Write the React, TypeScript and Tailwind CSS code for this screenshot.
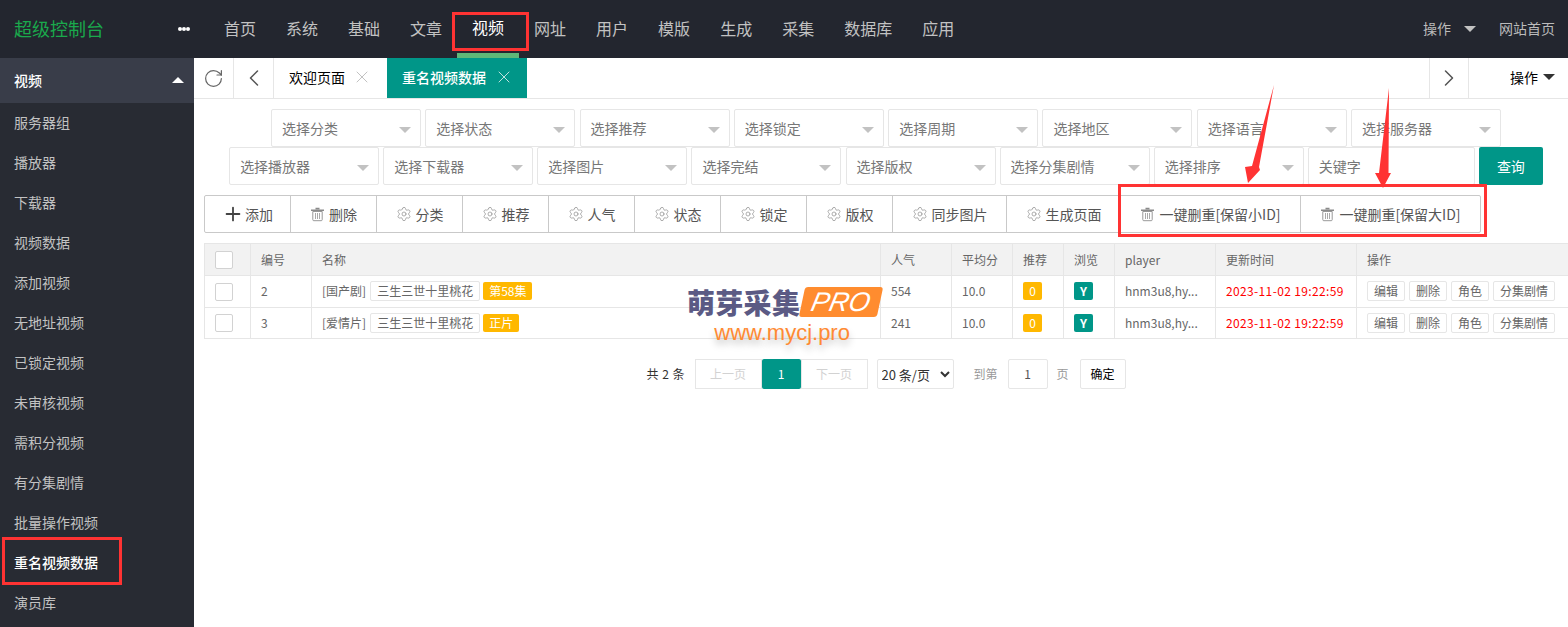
import { ChevronLeft, ChevronRight, Plus, RotateCw, Settings, X } from 'lucide-react';

const NAV = ['首页', '系统', '基础', '文章', '视频', '网址', '用户', '模版', '生成', '采集', '数据库', '应用'];
const SIDE = ['服务器组', '播放器', '下载器', '视频数据', '添加视频', '无地址视频', '已锁定视频', '未审核视频', '需积分视频', '有分集剧情', '批量操作视频', '重名视频数据', '演员库'];
const ROW1 = ['选择分类', '选择状态', '选择推荐', '选择锁定', '选择周期', '选择地区', '选择语言', '选择服务器'];
const ROW2 = ['选择播放器', '选择下载器', '选择图片', '选择完结', '选择版权', '选择分集剧情', '选择排序'];
const GEARS = [
  { label: '分类', w: 'w-[86px]' },
  { label: '推荐', w: 'w-[86px]' },
  { label: '人气', w: 'w-[86px]' },
  { label: '状态', w: 'w-[86px]' },
  { label: '锁定', w: 'w-[86px]' },
  { label: '版权', w: 'w-[86px]' },
  { label: '同步图片', w: 'w-[114px]' },
  { label: '生成页面', w: 'w-[114px]' },
];
const ROWS = [
  { id: 2, type: '[国产剧]', badge: '第58集', hits: 554, h: 'h-8' },
  { id: 3, type: '[爱情片]', badge: '正片', hits: 241, h: 'h-[31px]' },
];

function Select({ label }: { label: string }) {
  return (
    <div className="flex h-[38px] w-[150px] items-center justify-between rounded-[2px] border border-[#e6e6e6] bg-white pl-[10px] pr-[9px] text-sm text-[#777]">
      {label}
      <span className="mt-[3px] h-0 w-0 border-x-[6px] border-t-[6px] border-x-transparent border-t-[#c2c2c2]" />
    </div>
  );
}

function TrashIcon() {
  return (
    <svg width="15" height="15" viewBox="0 0 15 15" className="shrink-0">
      <path d="M5.5 1.5h4M1 3.2h13" stroke="#8a8a8a" strokeWidth="1.6" fill="none" />
      <path d="M2.8 4.5h9.4v8.2a1 1 0 0 1-1 1H3.8a1 1 0 0 1-1-1z" fill="none" stroke="#999" strokeWidth="1" />
      <path d="M5.5 6v6M7.5 6v6M9.5 6v6" stroke="#aaa" strokeWidth="1" />
    </svg>
  );
}

function Checkbox() {
  return <span className="ml-[10px] block h-[18px] w-[18px] rounded-[2px] border border-[#d2d2d2] bg-white" />;
}

function Th({ children }: { children?: React.ReactNode }) {
  return <th className="border border-[#e6e6e6] pl-[10px] text-left text-xs font-normal text-[#666]">{children}</th>;
}

function Td({ children }: { children?: React.ReactNode }) {
  return <td className="border border-[#e6e6e6] pb-[1px] pl-[10px] text-xs text-[#666]">{children}</td>;
}

function MiniBtn({ label }: { label: string }) {
  return <span className="flex h-5 items-center rounded-[2px] border border-[#e6e6e6] bg-white px-[6px] text-xs text-[#666]">{label}</span>;
}

export default function App() {
  return (
    <div className="relative flex h-[627px] w-full flex-col overflow-hidden bg-white font-['Noto_Sans_CJK_SC',sans-serif]">
      <header className="flex h-[58px] shrink-0 items-center bg-[#23262f]">
        <div className="flex w-[194px] shrink-0 items-center justify-between pb-[2px] pl-[14px] pr-[4px]">
          <span className="text-lg text-[#1aa94c]">超级控制台</span>
          <span className="mt-[2px] flex">
            <i className="h-1 w-1 rounded-full bg-white" />
            <i className="h-1 w-1 rounded-full bg-white" />
            <i className="h-1 w-1 rounded-full bg-white" />
          </span>
        </div>
        <nav className="ml-[15px] flex h-full">
          {NAV.map((n) => (
            <a
              key={n}
              className={
                n === '视频'
                  ? 'flex h-full items-center border-b-[5px] border-[#5fb878] px-[15px] pt-[1px] text-base text-white'
                  : 'flex h-full items-center px-[15px] pb-[2px] text-base text-[#c2c2c2]'
              }
            >
              {n}
            </a>
          ))}
        </nav>
        <div className="ml-auto flex items-center pb-[2px] pr-[13px] text-sm text-[#bbb]">
          操作
          <span className="ml-[13px] mr-[23px] mt-[2px] h-0 w-0 border-x-[6px] border-t-[6px] border-x-transparent border-t-[#c2c2c2]" />
          网站首页
        </div>
      </header>

      <div className="flex min-h-0 flex-1">
        <aside className="w-[194px] shrink-0 bg-[#282b33]">
          <div className="flex h-[45px] items-center justify-between bg-[#393d49] pb-[2px] pl-[14px] pr-[10px] text-sm font-medium text-white">
            视频
            <span className="h-0 w-0 border-x-[6px] border-b-[6px] border-x-transparent border-b-white" />
          </div>
          {SIDE.map((s) => (
            <div
              key={s}
              className={
                s === '重名视频数据'
                  ? 'flex h-10 items-center pb-[3px] pl-[14px] text-sm font-medium text-white'
                  : 'flex h-10 items-center pb-[3px] pl-[14px] text-sm text-[#c2c2c2]'
              }
            >
              {s}
            </div>
          ))}
        </aside>

        <main className="min-w-0 flex-1">
          <div className="flex h-[41px] items-stretch border-b border-[#e6e6e6]">
            <div className="flex w-10 items-center justify-center border-r border-[#e6e6e6]">
              <RotateCw className="h-[21px] w-[21px] text-[#666]" strokeWidth={1.4} />
            </div>
            <div className="flex w-10 items-center justify-center border-r border-[#e6e6e6]">
              <ChevronLeft className="h-7 w-7 text-[#555]" strokeWidth={1.3} />
            </div>
            <div className="flex w-[113px] items-center gap-[7px] pb-[2px] pl-[15px] text-sm text-black">
              欢迎页面
              <X className="h-5 w-5 text-[#c2c2c2]" strokeWidth={1.2} />
            </div>
            <div className="flex w-[140px] items-center gap-[8px] bg-[#009688] pb-[2px] pl-[15px] text-sm font-medium text-white">
              重名视频数据
              <X className="h-5 w-5 text-[#bfe3df]" strokeWidth={1.2} />
            </div>
            <div className="ml-auto flex w-10 items-center justify-center border-x border-[#e6e6e6]">
              <ChevronRight className="h-7 w-7 text-[#555]" strokeWidth={1.3} />
            </div>
            <div className="flex w-[99px] items-center justify-end gap-[5px] pb-[2px] pr-[13px] text-sm text-black">
              操作
              <span className="h-0 w-0 border-x-[6px] border-t-[6px] border-x-transparent border-t-[#333]" />
            </div>
          </div>

          <div className="pl-[10px] pt-[10px]">
            <div className="flex justify-center gap-[4.3px]">
              {ROW1.map((l) => (
                <Select key={l} label={l} />
              ))}
            </div>
            <div className="flex justify-center gap-[4.1px]">
              {ROW2.map((l) => (
                <Select key={l} label={l} />
              ))}
              <div className="flex h-[38px] w-[167px] items-center rounded-[2px] border border-[#e6e6e6] pl-[10px] text-sm text-[#777]">关键字</div>
              <button className="h-[38px] w-16 rounded-[2px] bg-[#009688] text-sm text-white">查询</button>
            </div>

            <div className="mt-[10px] flex h-[38px] w-[1277px] rounded-[2px] border border-[#c9c9c9] text-sm text-[#555]">
              <div className="flex w-[86px] items-center justify-center gap-[1px] border-r border-[#c9c9c9]">
                <Plus className="h-[22px] w-[22px] text-[#444]" strokeWidth={2} />
                添加
              </div>
              <div className="flex w-[86px] items-center justify-center gap-[4px] border-r border-[#c9c9c9]">
                <TrashIcon />
                删除
              </div>
              {GEARS.map((g) => (
                <div key={g.label} className={`flex ${g.w} items-center justify-center gap-[4px] border-r border-[#c9c9c9]`}>
                  <Settings className="h-4 w-4 text-[#999]" strokeWidth={1.2} />
                  {g.label}
                </div>
              ))}
              <div className="flex w-[180px] items-center justify-center gap-[4px] border-r border-[#c9c9c9]">
                <TrashIcon />
                一键删重[保留小ID]
              </div>
              <div className="flex w-[179px] items-center justify-center gap-[4px]">
                <TrashIcon />
                一键删重[保留大ID]
              </div>
            </div>

            <table className="mt-[10px] w-[1364px] table-fixed border-collapse">
              <colgroup>
                <col className="w-[46px]" />
                <col className="w-[61px]" />
                <col className="w-[569px]" />
                <col className="w-[71px]" />
                <col className="w-[61px]" />
                <col className="w-[51px]" />
                <col className="w-[51px]" />
                <col className="w-[101px]" />
                <col className="w-[141px]" />
                <col className="w-[212px]" />
              </colgroup>
              <thead>
                <tr className="h-8 bg-[#f2f2f2]">
                  <th className="border border-[#e6e6e6]">
                    <Checkbox />
                  </th>
                  <Th>编号</Th>
                  <Th>名称</Th>
                  <Th>人气</Th>
                  <Th>平均分</Th>
                  <Th>推荐</Th>
                  <Th>浏览</Th>
                  <Th>player</Th>
                  <Th>更新时间</Th>
                  <Th>操作</Th>
                </tr>
              </thead>
              <tbody>
                {ROWS.map((r) => (
                  <tr key={r.id} className={r.h}>
                    <td className="border border-[#e6e6e6]">
                      <Checkbox />
                    </td>
                    <Td>{r.id}</Td>
                    <td className="border border-[#e6e6e6] pb-[1px] pl-[10px] text-xs text-[#666]">
                      <div className="flex items-center">
                        {r.type}
                        <span className="ml-1 flex h-5 items-center rounded-[2px] border border-[#e6e6e6] px-[6px]">三生三世十里桃花</span>
                        <span className="ml-[3px] flex h-[18px] items-center rounded-[2px] bg-[#ffb800] px-[6px] text-white">{r.badge}</span>
                      </div>
                    </td>
                    <Td>{r.hits}</Td>
                    <Td>10.0</Td>
                    <Td>
                      <span className="flex h-[18px] w-[19px] items-center justify-center rounded-[2px] bg-[#ffb800] text-white">0</span>
                    </Td>
                    <Td>
                      <span className="flex h-[18px] w-[19px] items-center justify-center rounded-[2px] bg-[#009688] font-bold text-white">Y</span>
                    </Td>
                    <Td>hnm3u8,hy...</Td>
                    <td className="border border-[#e6e6e6] pb-[1px] pl-[10px] text-xs tracking-[0.36px] text-[#ff0000]">2023-11-02 19:22:59</td>
                    <Td>
                      <div className="flex gap-[4px]">
                        <MiniBtn label="编辑" />
                        <MiniBtn label="删除" />
                        <MiniBtn label="角色" />
                        <MiniBtn label="分集剧情" />
                      </div>
                    </Td>
                  </tr>
                ))}
              </tbody>
            </table>

            <div className="mt-5 flex h-[30px] items-center justify-center text-xs text-[#333]">
              <span className="mr-[10px] [word-spacing:1px]">共 2 条</span>
              <span className="flex h-[30px] w-[67px] items-center justify-center border border-[#e6e6e6] text-[#d2d2d2]">上一页</span>
              <span className="flex h-[30px] w-[39px] items-center justify-center rounded-[2px] bg-[#009688] text-white">1</span>
              <span className="flex h-[30px] w-[67px] items-center justify-center border border-[#e6e6e6] text-[#d2d2d2]">下一页</span>
              <select defaultValue="20" className="ml-[9px] h-[30px] w-[77px] rounded-[2px] border border-[#e6e6e6] bg-white text-[13px] text-[#333]">
                <option value="20">20 条/页</option>
              </select>
              <span className="ml-5 text-[#999]">到第</span>
              <span className="ml-[10px] flex h-[30px] w-10 items-center justify-center rounded-[2px] border border-[#e6e6e6] text-[#555]">1</span>
              <span className="ml-[9px] text-[#999]">页</span>
              <span className="ml-[11px] flex h-[30px] w-[46px] items-center justify-center rounded-[2px] border border-[#e6e6e6] text-black">确定</span>
            </div>
          </div>
        </main>
      </div>

      {/* annotations painted on the screenshot */}
      <div className="absolute left-[452px] top-[12px] h-[39px] w-[77px] border-[3px] border-[#f33]" />
      <div className="absolute left-[2px] top-[537px] h-[48px] w-[120px] border-[3px] border-[#f33]" />
      <div className="absolute left-[1118px] top-[184px] h-[53px] w-[369px] border-[3px] border-[#f33]" />
      <svg className="absolute left-[1230px] top-[80px]" width="170" height="115" viewBox="0 0 170 115">
        <path d="M44 5 L29 87 L30 90 L18 103 L15 87 L22 86 Z" fill="#f33" />
        <path d="M159 8 L158.5 93 L161 93 L153 108 L145 93 L149 93 Z" fill="#f33" />
      </svg>

      {/* watermark */}
      <div className="absolute left-[687px] top-[284px] flex flex-col items-center">
        <div className="flex items-center">
          <span className="text-[28px] font-black leading-[36px] tracking-[0.3px] text-[#5b5a84]">萌芽采集</span>
          <span className="ml-[2px] flex h-[30px] w-[78px] -skew-x-12 items-center justify-center rounded-[3px] bg-[#ff8c2f]">
            <span className="font-['Liberation_Sans',sans-serif] text-[27px] italic leading-none text-white">PRO</span>
          </span>
        </div>
        <span className="mt-[1px] pr-[3px] font-['Liberation_Sans',sans-serif] text-[22px] leading-[24px] text-[#ff8a33] [text-shadow:0_5px_7px_rgba(0,0,0,0.25)]">www.mycj.pro</span>
      </div>
    </div>
  );
}
